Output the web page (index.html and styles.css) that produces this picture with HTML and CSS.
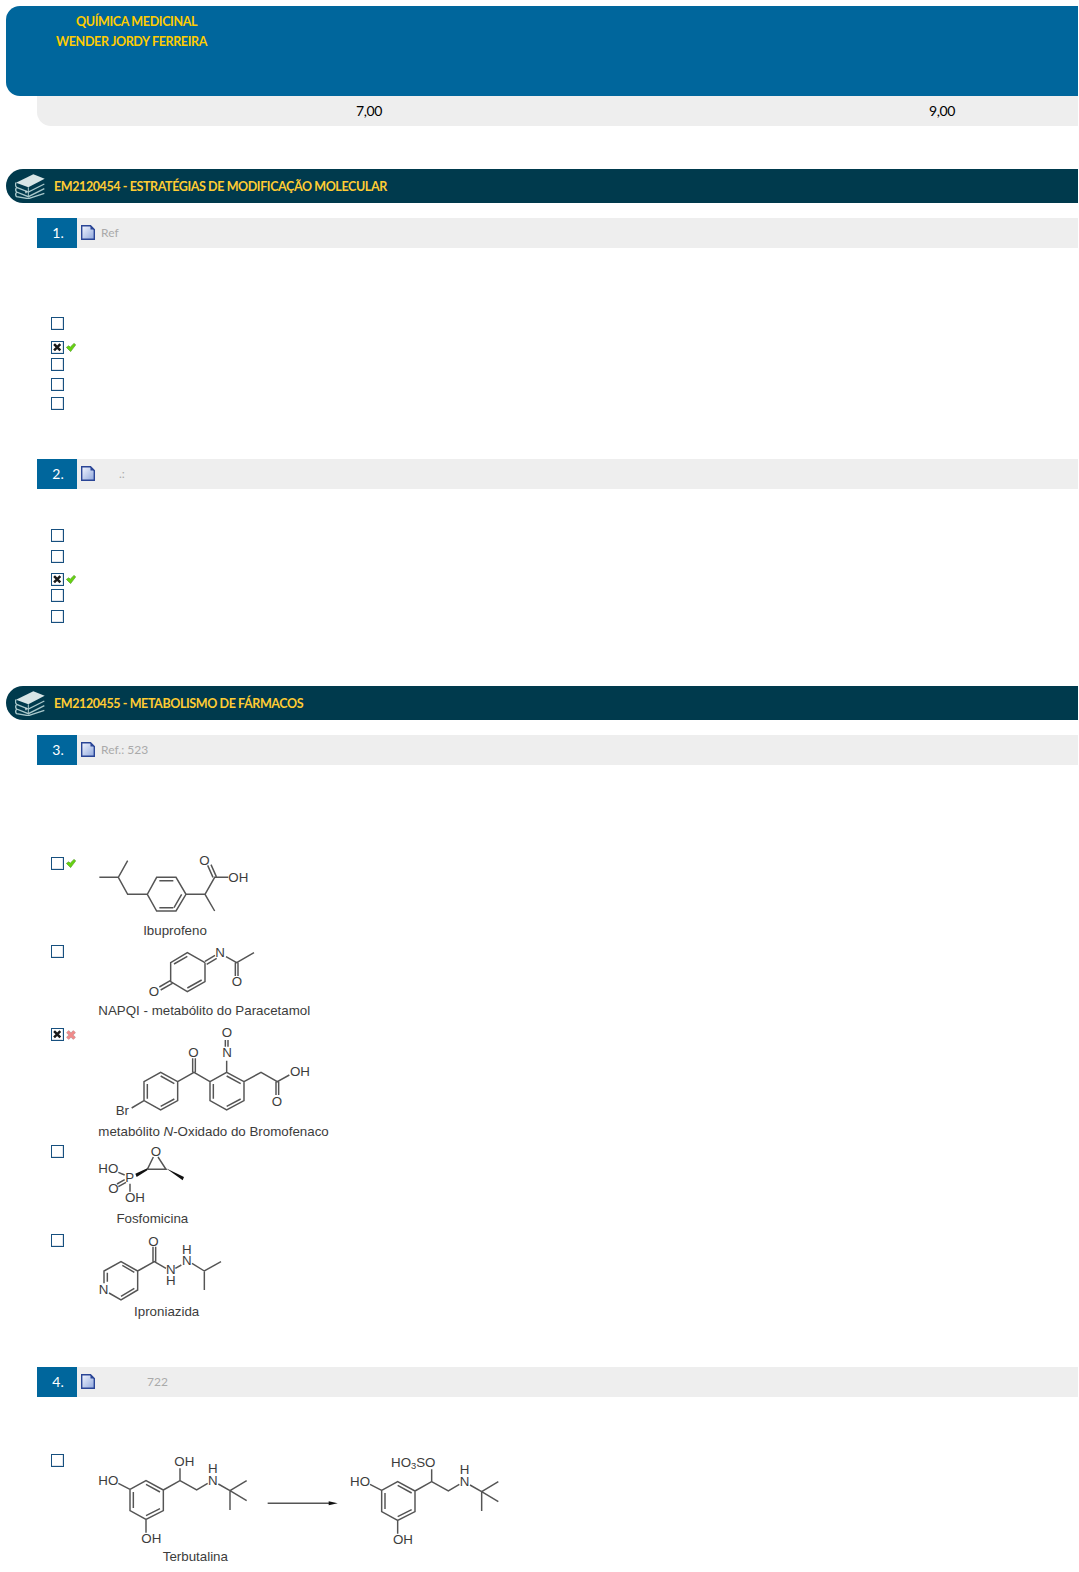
FILE: index.html
```html
<!DOCTYPE html>
<html lang="pt-br">
<head>
    <meta charset="UTF-8">
    <meta name="viewport" content="width=device-width, initial-scale=1.0">
    <title>Química Medicinal</title>
    <link rel="stylesheet" href="styles.css">
</head>
<body>
    <!-- Cabeçalho -->
    <div class="topo">
        <div class="disciplina">QUÍMICA MEDICINAL</div>
        <div class="aluno">WENDER JORDY FERREIRA</div>
    </div>
    <div class="notas">
        <span class="nota-a">7,00</span>
        <span class="nota-b">9,00</span>
    </div>

    <svg class="defs" width="0" height="0">
        <defs>
            <linearGradient id="folha" x1="0" y1="0" x2="1" y2="1">
                <stop offset="0" stop-color="#f4f7ff"/>
                <stop offset="1" stop-color="#8ea6dc"/>
            </linearGradient>
            <symbol id="livros" viewBox="45 42 90 75">
                <path d="M48 68 L100 43 L134 56 L85 82 Z" fill="#d8e5e6"/>
                <path d="M48 68 Q44 76 50 82 L85 96 L133 72 M50 82 Q44 90 50 96 L85 110 L133 86 M50 96 Q44 104 50 110 L85 116 L133 100" fill="none" stroke="#a9c8cb" stroke-width="4"/>
                <path d="M85 82 L85 112" stroke="#a9c8cb" stroke-width="3"/>
                <path d="M78 92 L78 100" stroke="#d8e5e6" stroke-width="4"/>
            </symbol>
            <symbol id="doc" viewBox="0 0 14 15">
                <path d="M.7.7 H9.5 L13.3 4.5 V14.3 H.7 Z" fill="url(#folha)" stroke="#2a4596" stroke-width="1.4"/>
                <path d="M9.5.6 V4.5 H13.4 Z" fill="#2a4596"/>
            </symbol>
            <symbol id="certo" viewBox="0 0 10 9">
                <path d="M.4 4.4 L2.8 2.8 L4.2 4.2 L8 .4 L9.7 1.8 L4.6 8.6 Z" fill="#66d40e" stroke="#569f2a" stroke-width=".7"/>
            </symbol>
            <symbol id="errado" viewBox="0 0 10 10">
                <path d="M1.5 1.5 L8.5 8.5 M8.5 1.5 L1.5 8.5" stroke="#b9a2a2" stroke-width="3.8"/>
                <path d="M1.5 1.5 L8.5 8.5 M8.5 1.5 L1.5 8.5" stroke="#f08a8a" stroke-width="2.6"/>
            </symbol>
            <symbol id="xis" viewBox="0 0 11 11">
                <path d="M2.2 2.2 L8.8 8.8 M8.8 2.2 L2.2 8.8" stroke="#1a1a1a" stroke-width="2.7"/>
            </symbol>
        </defs>
    </svg>

    <!-- Tema 1 -->
    <div class="tema">
        <svg class="tema-icone"><use href="#livros"/></svg>
        <span class="tema-titulo">EM2120454 - ESTRATÉGIAS DE MODIFICAÇÃO MOLECULAR</span>
    </div>

    <div class="questao">
        <span class="numero">1.</span>
        <svg class="doc"><use href="#doc"/></svg>
        <span class="ref">Ref</span>
    </div>
    <div class="opcoes opcoes-1">
        <div class="opcao h24"><span class="caixa"></span></div>
        <div class="opcao h17"><span class="caixa"><svg><use href="#xis"/></svg></span><svg class="status"><use href="#certo"/></svg></div>
        <div class="opcao h20"><span class="caixa"></span></div>
        <div class="opcao h19"><span class="caixa"></span></div>
        <div class="opcao h13"><span class="caixa"></span></div>
    </div>

    <div class="questao questao-2">
        <span class="numero">2.</span>
        <svg class="doc"><use href="#doc"/></svg>
        <span class="ref ref-2">.:</span>
    </div>
    <div class="opcoes opcoes-2">
        <div class="opcao h21"><span class="caixa"></span></div>
        <div class="opcao h23"><span class="caixa"></span></div>
        <div class="opcao h16"><span class="caixa"><svg><use href="#xis"/></svg></span><svg class="status"><use href="#certo"/></svg></div>
        <div class="opcao h21"><span class="caixa"></span></div>
        <div class="opcao h13"><span class="caixa"></span></div>
    </div>

    <!-- Tema 2 -->
    <div class="tema tema-2">
        <svg class="tema-icone"><use href="#livros"/></svg>
        <span class="tema-titulo">EM2120455 - METABOLISMO DE FÁRMACOS</span>
    </div>

    <div class="questao">
        <span class="numero">3.</span>
        <svg class="doc"><use href="#doc"/></svg>
        <span class="ref">Ref.: 523</span>
    </div>
    <div class="opcoes opcoes-3">
        <!-- Ibuprofeno -->
        <div class="opcao opcao-img">
            <span class="caixa"></span>
            <span class="marca"><svg class="status"><use href="#certo"/></svg></span>
            <svg class="mol" width="244" height="88" viewBox="168 42 732 264">
                <path d="M178 112 H235 L263 62 M235 112 L263 163 H322 L350 112 H408 L438 163 L408 213 H350 L322 163 M438 163 H495 L524 213 M495 163 L524 112 H565 M358 122 H400 M358 203 H400 M425 163 L402 203 M519 112 L503 76 M529 110 L513 74"/>
                <text x="478" y="74">O</text>
                <text x="565" y="125">OH</text>
                <text class="nome" x="405" y="285" text-anchor="middle">Ibuprofeno</text>
            </svg>
        </div>
        <!-- NAPQI -->
        <div class="opcao opcao-img">
            <span class="caixa"></span>
            <span class="marca"></span>
            <svg class="mol" width="244" height="83" viewBox="168 306 732 249">
                <path d="M495 368 V425 L442 455 L392 425 V368 L442 338 L495 368 M402 372 L442 349 M485 420 L442 444 M392 421 L358 441 M397 430 L362 450 M495 364 L525 346 M500 373 L530 355 M558 350 L590 368 L642 338 M586 368 V408 M594 368 V408"/>
                <text x="526" y="351">N</text>
                <text x="326" y="469">O</text>
                <text x="575" y="437">O</text>
                <text class="nome" x="175" y="526">NAPQI - metabólito do Paracetamol</text>
            </svg>
        </div>
        <!-- Bromofenaco -->
        <div class="opcao opcao-img">
            <span class="caixa"><svg><use href="#xis"/></svg></span>
            <span class="marca"><svg class="status status-x"><use href="#errado"/></svg></span>
            <svg class="mol" width="244" height="117" viewBox="168 15 732 351">
                <path d="M312 185 L362 157 L413 185 V242 L362 270 L312 242 Z M322 192 V236 M362 168 L403 191 M403 237 L362 259 M413 185 L462 157 L510 185 M510 185 L560 157 L612 185 V242 L560 270 L510 242 Z M458 157 V115 M466 157 V115 M520 236 V192 M560 168 L602 191 M602 237 L560 259 M560 157 V122 M556 80 V60 M564 80 V60 M612 185 L663 157 L712 185 L748 165 M708 185 V225 M716 185 V225 M312 242 L275 264"/>
                <text x="545" y="52">O</text>
                <text x="445" y="111">O</text>
                <text x="547" y="111">N</text>
                <text x="750" y="168">OH</text>
                <text x="695" y="257">O</text>
                <text x="227" y="285">Br</text>
                <text class="nome" x="175" y="347">metabólito <tspan class="italico">N</tspan>-Oxidado do Bromofenaco</text>
            </svg>
        </div>
        <!-- Fosfomicina -->
        <div class="opcao opcao-img">
            <span class="caixa"></span>
            <span class="marca"></span>
            <svg class="mol" width="244" height="89" viewBox="168 21 732 267">
                <path d="M322 103 H378 L354 66 M322 103 L340 66 M235 112 L254 120 M231 147 L254 134 M235 155 L258 142 M270 146 V170"/>
                <path class="cunha" d="M322 100 L322 106 L290 126 L286 116 Z M378 100 L432 126 L428 136 Z"/>
                <text x="332" y="63">O</text>
                <text x="175" y="114">HO</text>
                <text x="256" y="142">P</text>
                <text x="205" y="174">O</text>
                <text x="255" y="202">OH</text>
                <text class="nome" x="337" y="265" text-anchor="middle">Fosfomicina</text>
            </svg>
        </div>
        <!-- Iproniazida -->
        <div class="opcao opcao-img">
            <span class="caixa"></span>
            <span class="marca"></span>
            <svg class="mol" width="244" height="94" viewBox="168 288 732 282">
                <path d="M192 445 V408 L243 380 L293 408 V465 L243 495 L207 474 M202 440 V413 M247 391 L283 412 M283 460 L243 484 M293 408 L343 380 L378 400 M339 380 V335 M347 380 V335 M406 400 L424 390 M456 385 L493 408 L543 380 M493 408 V465"/>
                <text x="325" y="332">O</text>
                <text x="378" y="417">N</text>
                <text x="378" y="451">H</text>
                <text x="426" y="390">N</text>
                <text x="426" y="356">H</text>
                <text x="176" y="478">N</text>
                <text class="nome" x="380" y="542" text-anchor="middle">Iproniazida</text>
            </svg>
        </div>
    </div>

    <div class="questao questao-4">
        <span class="numero">4.</span>
        <svg class="doc"><use href="#doc"/></svg>
        <span class="ref ref-4">722</span>
    </div>
    <div class="opcoes opcoes-4">
        <!-- Terbutalina -->
        <div class="opcao opcao-img">
            <span class="caixa"></span>
            <span class="marca"></span>
            <svg class="mol" width="424" height="121" viewBox="168 63 1272 363">
                <path d="M270 178 L318 152 L370 180 V242 L318 268 L270 242 Z M235 160 L270 178 M280 186 V234 M318 163 L360 186 M360 236 L318 257 M318 268 V308 M370 180 L420 152 V115 M420 152 L470 180 L503 160 M535 162 L570 182 L620 152 M570 182 L620 212 M570 182 V240"/>
                <text x="175" y="166">HO</text>
                <text x="403" y="108">OH</text>
                <text x="504" y="165">N</text>
                <text x="504" y="130">H</text>
                <text x="304" y="339">OH</text>
                <text class="nome" x="466" y="393" text-anchor="middle">Terbutalina</text>
                <path d="M683 220 H870"/>
                <path class="cunha" d="M866 214 L893 220 L866 226 Z"/>
                <path d="M1025 181 L1073 155 L1125 183 V245 L1073 271 L1025 245 Z M990 163 L1025 181 M1035 189 V237 M1073 166 L1115 189 M1115 239 L1073 260 M1073 271 V311 M1125 183 L1175 155 V118 M1175 155 L1225 183 L1258 163 M1290 165 L1325 185 L1375 155 M1325 185 L1375 215 M1325 185 V243"/>
                <text x="930" y="169">HO</text>
                <text x="1053" y="110">HO<tspan class="sub" dy="7">3</tspan><tspan dy="-7">SO</tspan></text>
                <text x="1259" y="168">N</text>
                <text x="1259" y="133">H</text>
                <text x="1059" y="342">OH</text>
            </svg>
        </div>
    </div>
</body>
</html>
```

FILE: styles.css
```css
body {
    margin: 0;
    padding: 6px 1px 0 6px;
    font-family: "Lato", "Open Sans", sans-serif;
    overflow: hidden;
}
.defs {
    display: block;
    height: 0;
}

/* Cabeçalho */
.topo {
    height: 90px;
    background-color: #00669c;
    border-radius: 14px 0 0 14px;
    color: #ffcc00;
    font-size: 12.5px;
    font-weight: 700;
    line-height: 20px;
    letter-spacing: -0.35px;
    padding-top: 5.5px;
    box-sizing: border-box;
}
.disciplina {
    margin-left: 70px;
}
.aluno {
    margin-left: 50px;
}
.notas {
    display: flex;
    height: 30px;
    margin-left: 31px;
    padding-bottom: 2px;
    box-sizing: border-box;
    background-color: #eeeeee;
    border-bottom-left-radius: 14px;
    align-items: center;
    font-size: 14px;
    letter-spacing: -0.4px;
    color: #000;
}
.nota-a {
    margin-left: 319px;
}
.nota-b {
    margin-left: 547px;
}

/* Temas */
.tema {
    display: flex;
    align-items: center;
    height: 34px;
    margin-top: 43px;
    background-color: #003a4d;
    border-radius: 17px 0 0 17px;
    color: #ffcc33;
    font-size: 12.5px;
    font-weight: 700;
    letter-spacing: -0.4px;
}
.tema-2 {
    margin-top: 63px;
}
.tema-icone {
    width: 30px;
    height: 25px;
    margin: 0 9px 0 9px;
}
.tema-titulo {
    padding-top: 1px;
}

/* Questões */
.questao {
    display: flex;
    align-items: center;
    height: 30px;
    margin: 15px 0 0 31px;
    background-color: #eeeeee;
}
.questao-2 {
    margin-top: 49px;
}
.questao-4 {
    margin-top: 42px;
}
.numero {
    width: 38px;
    height: 30px;
    padding-left: 2px;
    line-height: 30px;
    background-color: #00669c;
    color: #fff;
    font-size: 14px;
    text-align: center;
}
.doc {
    width: 14px;
    height: 15px;
    margin: 0 0 2px 4px;
}
.ref {
    margin-left: 6px;
    padding-bottom: 2px;
    color: #aaaaaa;
    font-size: 12px;
}
.ref-2 {
    margin-left: 24px;
}
.ref-4 {
    margin-left: 52px;
}

/* Opções */
.opcoes {
    margin-left: 45px;
}
.opcoes-1 {
    margin-top: 69px;
}
.opcoes-2 {
    margin-top: 40px;
}
.opcoes-3 {
    margin-top: 89px;
}
.opcoes-4 {
    margin-top: 54px;
}
.opcao {
    display: flex;
    align-items: flex-start;
}
.h13 { height: 13px; }
.h16 { height: 16px; }
.h17 { height: 17px; }
.h19 { height: 19px; }
.h20 { height: 20px; }
.h21 { height: 21px; }
.h23 { height: 23px; }
.h24 { height: 24px; }

.caixa {
    display: block;
    width: 13px;
    height: 13px;
    box-sizing: border-box;
    border: 1.3px solid #17507f;
    box-shadow: inset -1px -1px 0 #dfe3ea;
    flex: none;
}
.caixa svg {
    display: block;
    width: 10.4px;
    height: 10.4px;
}
.status {
    width: 10px;
    height: 9px;
    margin: 2px 0 0 2px;
    flex: none;
}
.status-x {
    height: 10px;
}
.marca {
    width: 32px;
    flex: none;
}
.opcao-img .caixa {
    margin-top: 3px;
}
.opcao-img .status {
    display: block;
    margin-top: 5px;
}

/* Estruturas químicas */
.mol {
    display: block;
    flex: none;
}
.mol path {
    fill: none;
    stroke: #555555;
    stroke-width: 4.4;
}
.mol .cunha {
    fill: #111;
    stroke: none;
}
.mol text {
    font-family: "Liberation Sans", Arial, sans-serif;
    font-size: 40px;
    fill: #3c3c3c;
}
.mol .nome {
    font-size: 40px;
}
.mol .italico {
    font-style: italic;
}
.mol .sub {
    font-size: 28px;
}
```
